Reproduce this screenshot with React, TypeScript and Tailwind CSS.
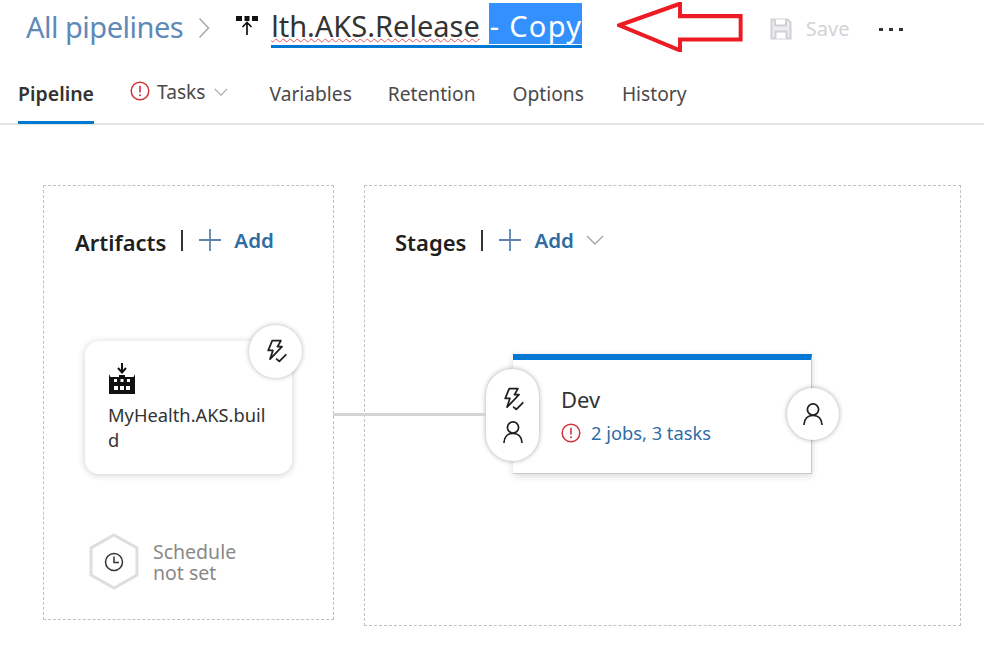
import React from "react";

const Bolt = ({ className = "" }: { className?: string }) => (
  <svg viewBox="1 1 23 23" className={className} fill="none" stroke="#201f1e" strokeWidth="1.600" strokeLinejoin="round" strokeLinecap="round">
    <path d="M9.500 2.500h8l-3.200 5.600h4.200L7.500 19.500l2.600-8H5.800z" />
    <path d="M13.500 19.500l2.500 2 6-6" />
  </svg>
);

const Person = ({ className = "" }: { className?: string }) => (
  <svg viewBox="2 1.500 20 22" className={className} fill="none" stroke="#201f1e" strokeWidth="1.700" strokeLinecap="round">
    <circle cx="12" cy="8" r="5.600" />
    <path d="M3 23c.4-5.800 4-9.200 9-9.200s8.600 3.400 9 9.200" />
  </svg>
);

const Warn = ({ className = "" }: { className?: string }) => (
  <svg viewBox="0 0 20 20" className={className} fill="none">
    <circle cx="10" cy="10" r="8.800" stroke="#d13438" strokeWidth="1.500" />
    <path d="M10 4.800v6.800" stroke="#d13438" strokeWidth="1.600" />
    <circle cx="10" cy="14.300" r="1" fill="#d13438" />
  </svg>
);

const Chevron = ({ className = "" }: { className?: string }) => (
  <svg viewBox="0 0 18 10" className={className} fill="none" stroke="#a6a6a6" strokeWidth="1.400">
    <path d="M1 1l8 8 8-8" />
  </svg>
);

const Plus = () => (
  <svg viewBox="0 0 24 24" className="w-[24px] h-[24px]" fill="none" stroke="#5f83ad" strokeWidth="1.800">
    <path d="M12 1v22M1 12h22" />
  </svg>
);

const Tab = ({ children, className = "" }: { children: React.ReactNode; className?: string }) => (
  <span className={`text-[19.200px] leading-[28px] text-[#4a4a4a] ${className}`}>{children}</span>
);

const SectionHead = ({ title, chevron }: { title: string; chevron?: boolean }) => (
  <div className="flex items-center h-[24px]">
    <span className="text-[22px] font-semibold text-[#201f1e] leading-[24px] mt-[4px]">{title}</span>
    <span className="w-[2px] h-[21px] bg-[#333333] ml-[15px] mr-[15px]" />
    <Plus />
    <span className="text-[20.500px] font-semibold text-[#2e6da4] ml-[12px] leading-[24px]">Add</span>
    {chevron && <Chevron className="w-[18px] h-[10px] ml-[12px]" />}
  </div>
);

export default function App() {
  return (
    <div className="relative w-[984px] h-[649px] bg-white overflow-hidden" style={{ fontFamily: '"Noto Sans", "Open Sans", sans-serif' }}>
      <header className="flex items-start h-[60px] pl-[26px]">
        <span className="text-[29px] leading-[40px] mt-[7px] text-[#5f8ab8] tracking-[-0.5px]">All pipelines</span>
        <svg viewBox="0 0 12 22" className="w-[12px] h-[22px] ml-[15px] mt-[17px]" fill="none" stroke="#a8a8a8" strokeWidth="1.500">
          <path d="M1.500 1.500l9 9.500-9 9.500" />
        </svg>
        <svg viewBox="0 0 24 24" className="w-[24px] h-[24px] ml-[25px] mt-[14px]" fill="none">
          <path d="M1 2h6v5H1zM9.500 2h5v5h-5zM17 2h6v5h-6z" fill="#111111" />
          <path d="M12 21V9M7.500 13L12 8.500l4.500 4.500" stroke="#111111" strokeWidth="1.700" />
        </svg>
        <div className="ml-[12px] mt-[3px] h-[45px] border-b-[3px] border-[#0078d4] flex items-start">
          <span className="text-[29px] leading-[36px] h-[41px] pt-[5px] text-[#333333] underline decoration-wavy decoration-[#e8555a] decoration-1 underline-offset-[1px] mr-[9px]">lth.AKS.Release</span>
          <span className="text-[29px] leading-[36px] h-[41px] pt-[5px] w-[93px] pl-[1px] tracking-[1.300px] whitespace-nowrap text-white bg-[#3390ff]">- Copy</span>
        </div>
        <svg viewBox="0 0 160 60" className="w-[126px] h-[50px] ml-[35px] mt-[2px]" fill="none" preserveAspectRatio="none">
          <path d="M3 28L80 2v15h77v28H80v13z" fill="#ffffff" stroke="#ed1c24" strokeWidth="5" />
        </svg>
        <svg viewBox="0 0 22 22" className="w-[22px] h-[22px] ml-[27px] mt-[18px]" fill="none" stroke="#d2d0d6" strokeWidth="2">
          <path d="M1.500 1.500h16l3 3v16h-19z" fill="#eeedf0" />
          <path d="M5 1.500v6h11v-6M5.500 20.500v-7h11v7" fill="#ffffff" />
        </svg>
        <span className="text-[20px] leading-[28px] mt-[15px] ml-[14px] text-[#d4d2d6]">Save</span>
        <div className="flex gap-[6px] ml-[30px] mt-[28px]">
          <span className="w-[4px] h-[3px] bg-[#333333]" />
          <span className="w-[4px] h-[3px] bg-[#333333]" />
          <span className="w-[4px] h-[3px] bg-[#333333]" />
        </div>
      </header>

      <nav className="flex items-start h-[65px] border-b-2 border-[#e4e4e4] pl-[18px]">
        <div className="h-[64px] border-b-[3px] border-[#0078d4] pt-[20px] w-[76px] text-[19.500px] font-semibold leading-[28px] text-[#333333]">Pipeline</div>
        <Warn className="w-[20px] h-[20px] ml-[36px] mt-[21px]" />
        <Tab className="ml-[7px] mt-[18px]">Tasks</Tab>
        <Chevron className="w-[14px] h-[8px] ml-[8px] mt-[28px]" />
        <Tab className="ml-[42px] mt-[20px]">Variables</Tab>
        <Tab className="ml-[36px] mt-[20px]">Retention</Tab>
        <Tab className="ml-[37px] mt-[20px]">Options</Tab>
        <Tab className="ml-[38px] mt-[20px]">History</Tab>
      </nav>

      <main className="flex items-start gap-[30px] pl-[43px] pt-[60px]">
        <section className="relative w-[291px] h-[435px] border border-dashed border-[#c0c0c0] pl-[31px] pt-[42px]">
          <SectionHead title="Artifacts" />
          <div className="relative w-[207px] h-[133px] ml-[10px] mt-[89px] bg-white rounded-[14px] shadow-[0_1px_7px_rgba(0,0,0,0.2)] pl-[23px] pt-[22px]">
            <svg viewBox="0 0 28 31" className="w-[28px] h-[31px]" fill="none">
              <path d="M14 0v8M10 5l4 4.500L18 5" stroke="#111111" strokeWidth="2" />
              <path d="M1 31V11l1.500 3H11v-2h6v2h8.500L27 11v20z" fill="#111111" />
              <path d="M6 16h3v3H6zM12.500 16h3v3h-3zM19 16h3v3h-3zM6 23h4v4H6zM12 23h4v4h-4zM18 23h4v4h-4z" fill="#ffffff" />
            </svg>
            <div className="w-[165px] mt-[8px] text-[18.300px] leading-[25px] text-[#333333] break-all">MyHealth.AKS.build</div>
            <div className="absolute right-[-10px] top-[-16px] w-[53px] h-[53px] rounded-full bg-white shadow-[0_0_5px_rgba(0,0,0,0.3)] flex items-center justify-center">
              <Bolt className="w-[25px] h-[25px]" />
            </div>
          </div>
          <div className="flex items-start ml-[14px] mt-[59px]">
            <div className="relative w-[50px] h-[57px] flex items-center justify-center">
              <svg viewBox="0 0 50 57" className="absolute inset-0 w-[50px] h-[57px]" fill="#ffffff" stroke="#dedede" strokeWidth="3">
                <path d="M25 2l23 13v27L25 55 2 42V15z" />
              </svg>
              <svg viewBox="0 0 20 20" className="relative w-[20px] h-[20px]" fill="none" stroke="#333333" strokeWidth="1.500">
                <circle cx="10" cy="10" r="8.500" />
                <path d="M10 4.500V10.500h5" />
              </svg>
            </div>
            <div className="ml-[14px] mt-[8px] text-[19.500px] leading-[21px] text-[#8a8886]">
              Schedule<br />not set
            </div>
          </div>
        </section>

        <section className="w-[597px] h-[441px] border border-dashed border-[#c0c0c0] pl-[30px] pt-[42px]">
          <SectionHead title="Stages" chevron />
          <div className="relative w-[299px] h-[120px] ml-[118px] mt-[102px] bg-white border-t-[6px] border-t-[#0078d4] border-r border-b border-r-[#c8c8c8] border-b-[#c8c8c8] shadow-[0_2px_7px_rgba(0,0,0,0.15)] pl-[48px] pt-[21px]">
            <div className="text-[22px] leading-[36px] text-[#333333]">Dev</div>
            <div className="flex items-center mt-[2px]">
              <Warn className="w-[20px] h-[20px]" />
              <span className="ml-[10px] text-[18.300px] leading-[28px] text-[#2e6da4]">2 jobs, 3 tasks</span>
            </div>
            <div className="absolute left-[-27px] top-[9px] w-[53px] h-[92px] rounded-full bg-white shadow-[0_0_5px_rgba(0,0,0,0.35)] flex flex-col items-center justify-center gap-[9px]">
              <Bolt className="w-[25px] h-[25px]" />
              <Person className="w-[20px] h-[22px]" />
            </div>
            <div className="absolute right-[-28px] top-[28px] w-[52px] h-[52px] rounded-full bg-white shadow-[0_0_5px_rgba(0,0,0,0.35)] flex items-center justify-center">
              <Person className="w-[20px] h-[22px]" />
            </div>
          </div>
        </section>
      </main>

      <div className="absolute left-[333px] top-[413px] w-[153px] h-[3px] bg-[#d4d4d4]" />
    </div>
  );
}
